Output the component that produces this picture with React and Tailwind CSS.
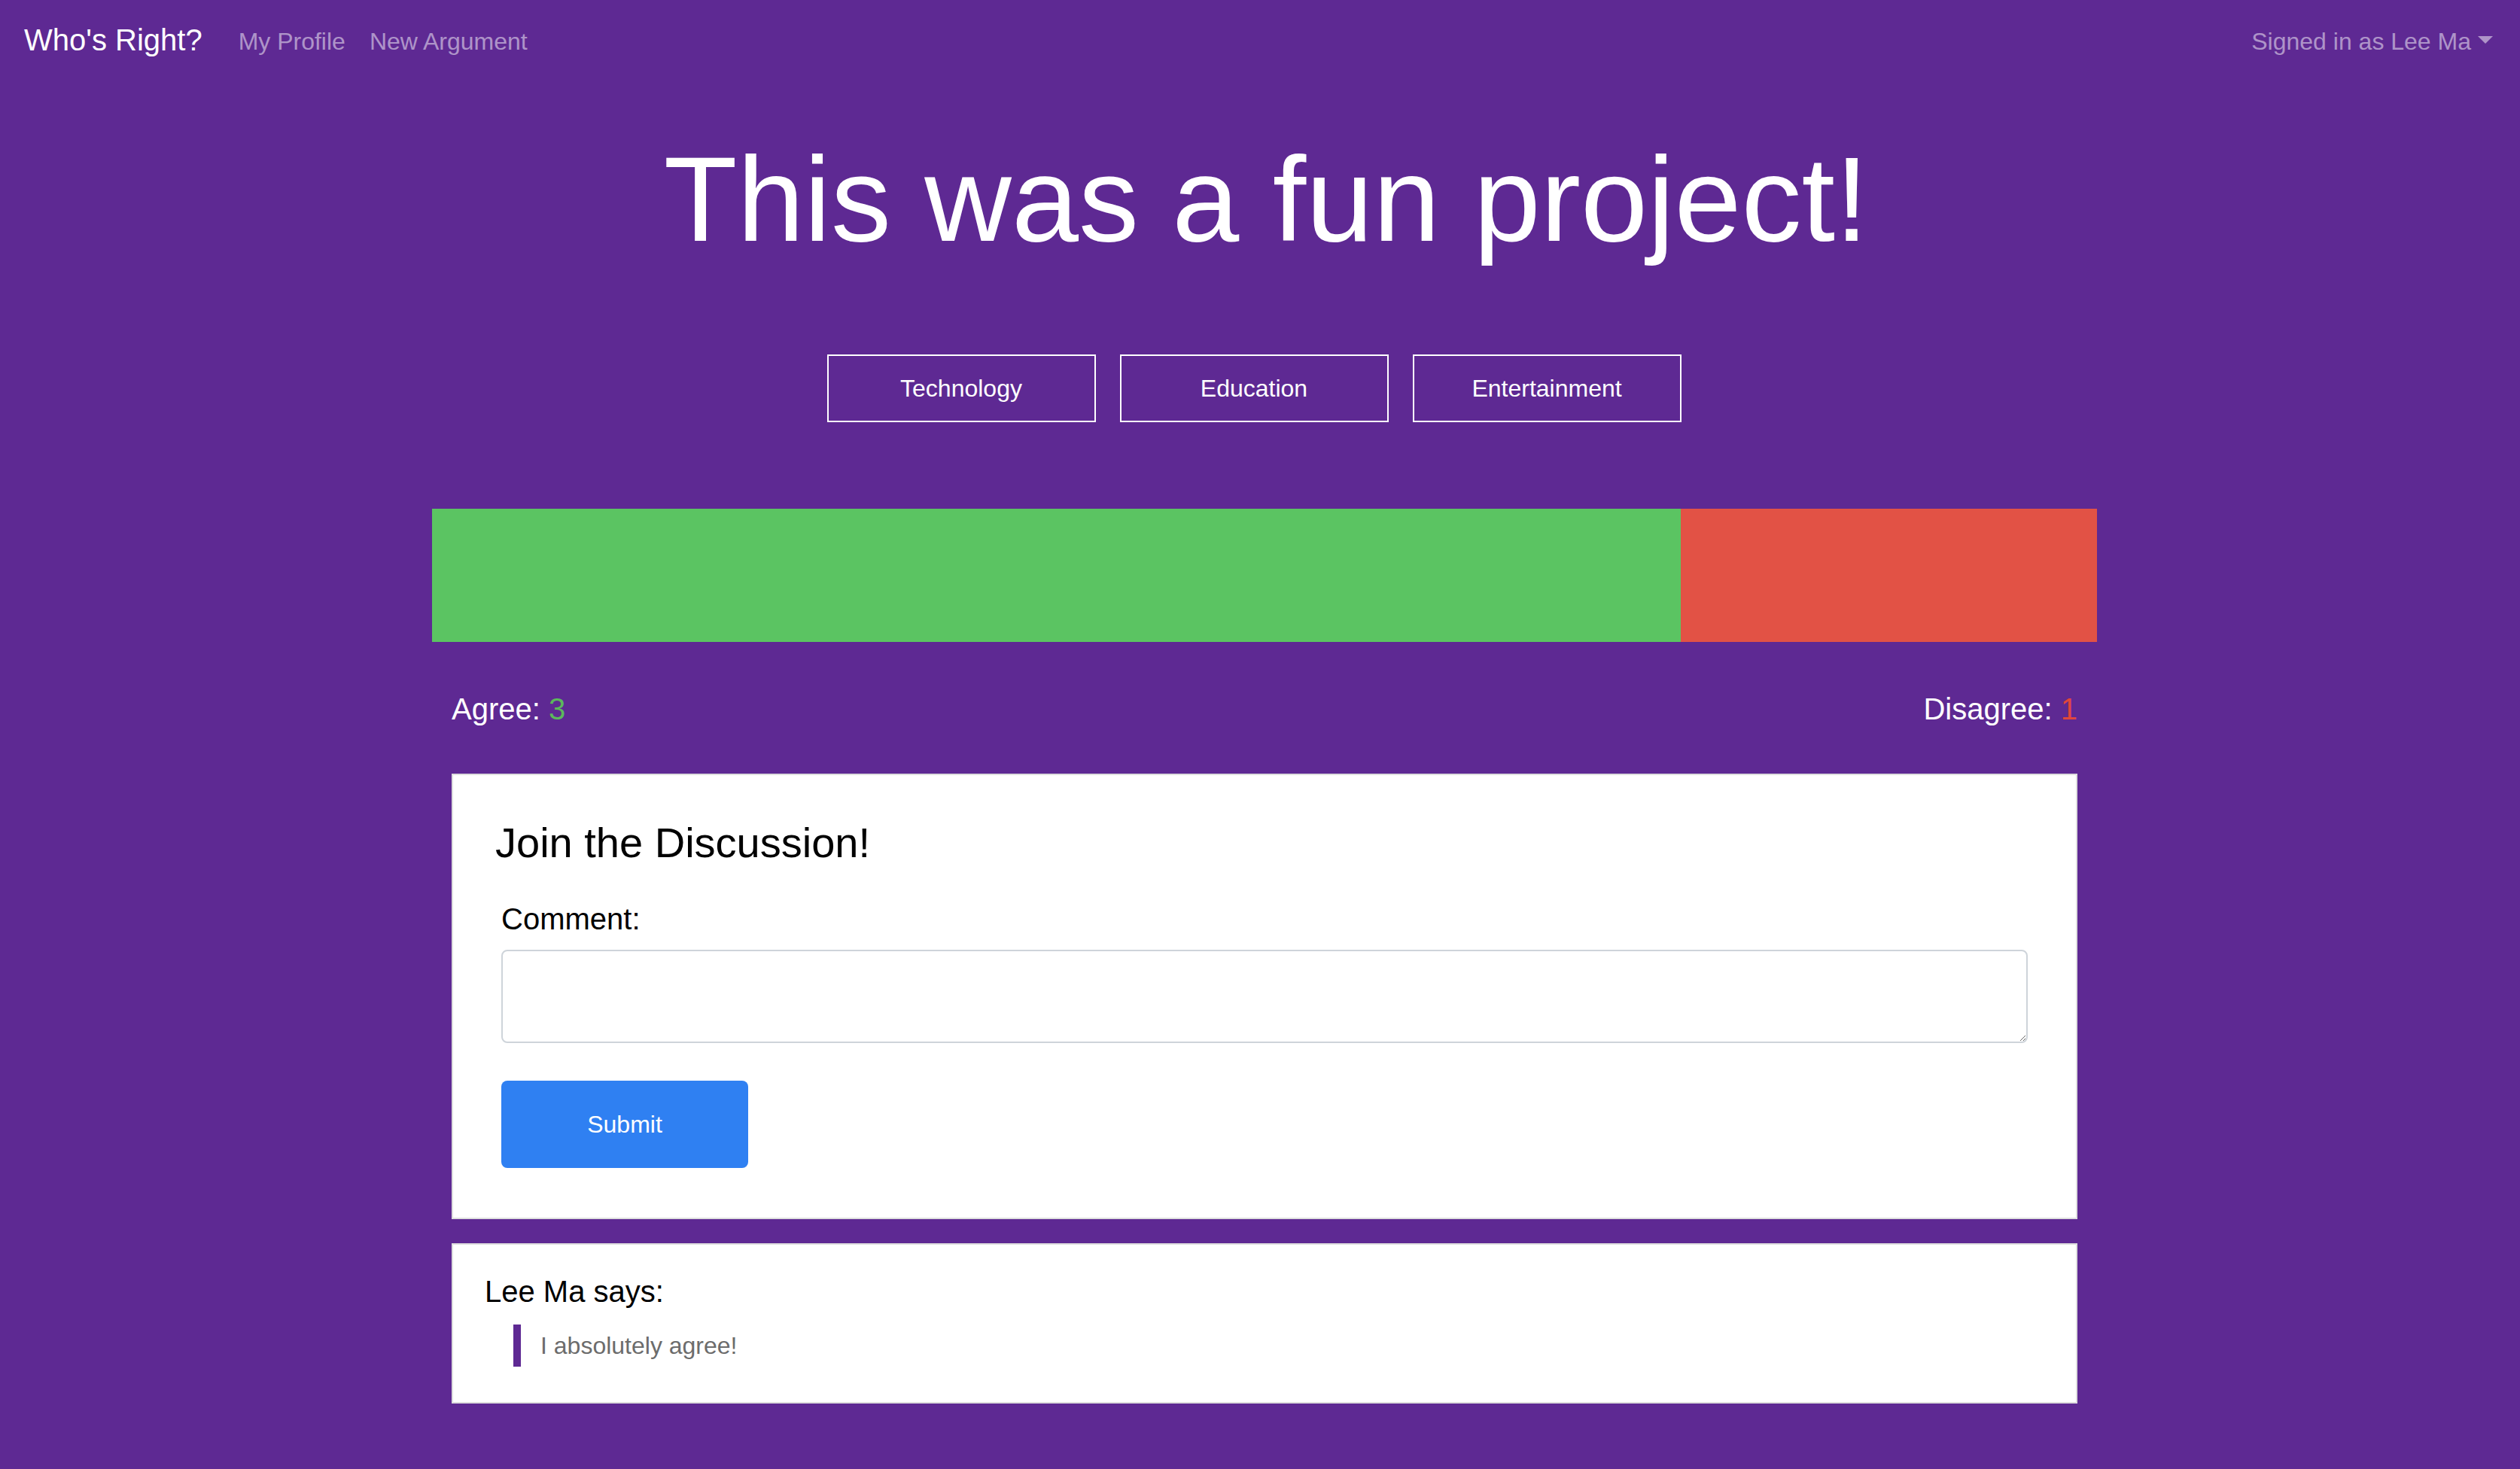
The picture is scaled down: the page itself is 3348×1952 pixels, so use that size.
import { useState } from "react";

const categories = ["Technology", "Education", "Entertainment"];

const votes = { agree: 3, disagree: 1 };

const comments = [{ author: "Lee Ma", body: "I absolutely agree!" }];

const NavBar = () => (
  <nav className="flex h-[106px] items-center justify-between pl-[32px] pr-[36px]">
    <div className="flex items-center">
      <a href="#" className="mr-[32px] text-[40px] leading-[60px] text-white">
        Who's Right?
      </a>
      <a href="#" className="px-[16px] pt-[4px] text-[32px] leading-[48px] text-white/50">
        My Profile
      </a>
      <a href="#" className="px-[16px] pt-[4px] text-[32px] leading-[48px] text-white/50">
        New Argument
      </a>
    </div>
    <button className="flex items-center pt-[4px] text-[32px] leading-[48px] text-white/50">
      Signed in as Lee Ma
      <span className="ml-[9px] mb-[4px] h-0 w-0 border-x-[10px] border-t-[10px] border-x-transparent border-t-white/50" />
    </button>
  </nav>
);

const VoteBar = () => {
  const total = votes.agree + votes.disagree;
  const agreePct = (votes.agree / total) * 100;

  return (
    <div>
      <div className="flex h-[177px]">
        <div className="h-full bg-[#5bc462]" style={{ width: `${agreePct}%` }} />
        <div className="h-full flex-1 bg-[#e25245]" />
      </div>
      <div className="mt-[59px] flex justify-between px-[26px] text-[40px] leading-[60px] text-white">
        <p>
          Agree: <span className="text-[#5cb85c]">{votes.agree}</span>
        </p>
        <p>
          Disagree: <span className="text-[#e0473b]">{votes.disagree}</span>
        </p>
      </div>
    </div>
  );
};

const CommentForm = () => {
  const [text, setText] = useState("");

  return (
    <section className="border-2 border-[#dedede] bg-white pb-[66px] pl-[56px] pr-[64px] pt-[56px]">
      <h3 className="text-[56px] leading-[67px] text-black">Join the Discussion!</h3>
      <form className="pl-[8px]" onSubmit={(e) => e.preventDefault()}>
        <label className="mt-[38px] block text-[40px] leading-[60px] text-black">Comment:</label>
        <textarea
          value={text}
          onChange={(e) => setText(e.target.value)}
          className="mt-[11px] block h-[124px] w-full rounded-[8px] border-2 border-[#ced4da] px-[24px] py-[12px] text-[32px] outline-none"
        />
        <button
          type="submit"
          className="mt-[50px] h-[116px] w-[328px] rounded-[8px] bg-[#2f80f2] text-[32px] text-white"
        >
          Submit
        </button>
      </form>
    </section>
  );
};

const CommentCard = ({ author, body }) => (
  <section className="border-2 border-[#dedede] bg-white pb-[47px] pl-[42px] pt-[32px]">
    <p className="text-[40px] leading-[60px] text-black">{author} says:</p>
    <blockquote className="ml-[38px] mt-[14px] border-l-[10px] border-[#5e2993] pl-[26px]">
      <p className="text-[32px] leading-[56px] text-[#6c6c6c]">{body}</p>
    </blockquote>
  </section>
);

const App = () => {
  return (
    <div className="min-h-screen bg-[#5e2993] font-['Liberation_Sans',Arial,sans-serif]">
      <NavBar />

      <h1 className="mt-[63px] pl-[16px] text-center text-[160px] leading-[192px] text-white">
        This was a fun project!
      </h1>

      <div className="mt-[110px] flex justify-center gap-[32px] pr-[16px]">
        {categories.map((cat) => (
          <button
            key={cat}
            className="h-[90px] w-[357px] border-2 border-white text-[32px] text-white"
          >
            {cat}
          </button>
        ))}
      </div>

      <main className="ml-[574px] w-[2212px] pb-[87px] pt-[115px]">
        <VoteBar />
        <div className="mt-[56px] flex flex-col gap-[32px] px-[26px]">
          <CommentForm />
          {comments.map((c) => (
            <CommentCard key={c.author} author={c.author} body={c.body} />
          ))}
        </div>
      </main>
    </div>
  );
};

export default App;
